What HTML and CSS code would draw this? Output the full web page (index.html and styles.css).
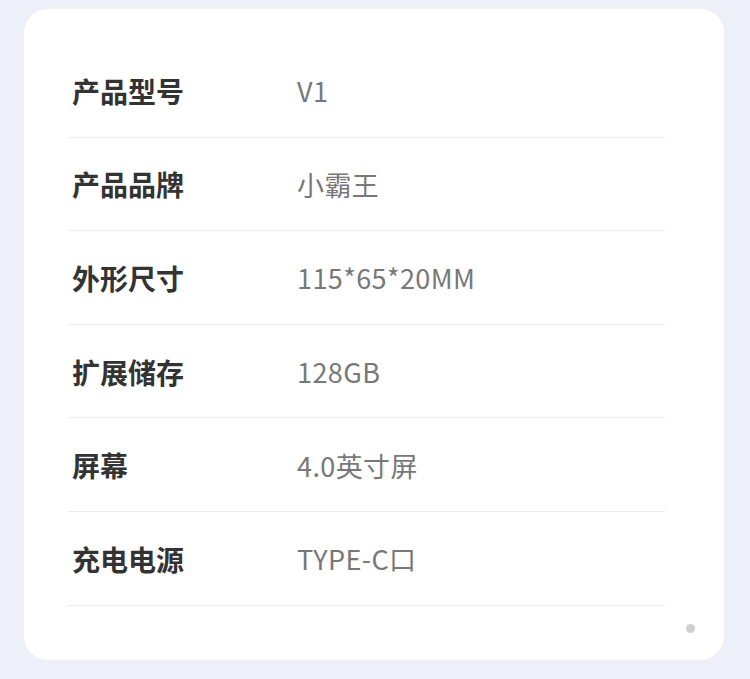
FILE: index.html
```html
<!DOCTYPE html>
<html lang="zh">
<head>
<meta charset="utf-8">
<title>产品参数</title>
<link rel="stylesheet" href="styles.css">
</head>
<body>
<div class="page">
  <div class="card">
    <div class="rows">
      <div class="row"><span class="label">产品型号</span><span class="value">V1</span></div>
      <div class="row"><span class="label">产品品牌</span><span class="value">小霸王</span></div>
      <div class="row"><span class="label">外形尺寸</span><span class="value">115*65*20MM</span></div>
      <div class="row"><span class="label">扩展储存</span><span class="value">128GB</span></div>
      <div class="row"><span class="label">屏幕</span><span class="value">4.0英寸屏</span></div>
      <div class="row"><span class="label">充电电源</span><span class="value">TYPE-C口</span></div>
    </div>
    <div class="dot"></div>
  </div>
</div>
</body>
</html>
```
FILE: styles.css
```css
html, body {
  margin: 0;
  padding: 0;
}
body {
  background: #edf0f8;
  font-family: "Noto Sans CJK SC", "Noto Sans", sans-serif;
}
.page {
  width: 750px;
  height: 679px;
  padding: 9px 26px 0 24px;
  box-sizing: border-box;
}
.card {
  background: #fff;
  border-radius: 24px;
  height: 651px;
  padding: 35px 59px 0 44px;
  box-sizing: border-box;
  display: flex;
  flex-direction: column;
}
.rows {
  display: flex;
  flex-direction: column;
}
.row {
  height: 93.6px;
  box-sizing: border-box;
  border-bottom: 1px solid #ececec;
  display: flex;
  align-items: center;
  padding: 1px 0 0 4px;
}
.label {
  width: 224px;
  font-size: 28px;
  font-weight: 700;
  color: #333;
}
.value {
  font-size: 27px;
  letter-spacing: 0.4px;
  color: #787878;
  padding-left: 1px;
}
.dot {
  align-self: flex-end;
  width: 9px;
  height: 9px;
  border-radius: 50%;
  background: #d0d0d0;
  margin: 18px -30px 0 0;
}
```
